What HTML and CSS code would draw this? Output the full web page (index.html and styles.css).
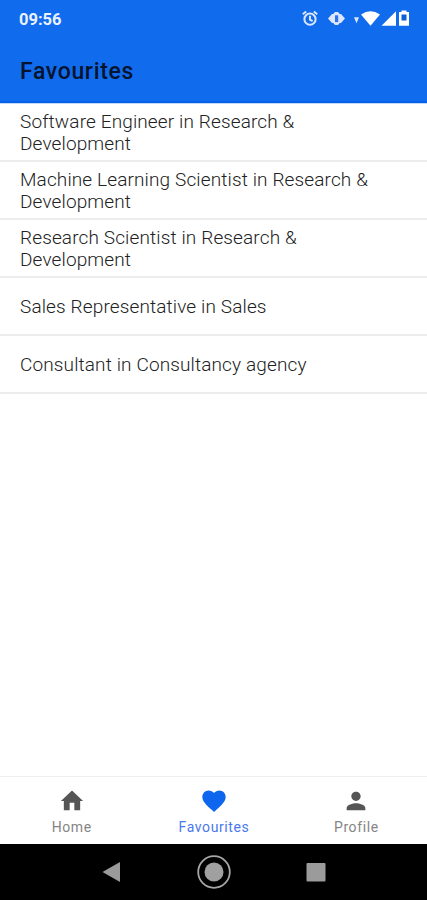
FILE: index.html
```html
<!DOCTYPE html>
<html lang="en">
<head>
    <meta charset="UTF-8">
    <meta name="viewport" content="width=device-width, initial-scale=1.0">
    <title>Favourites</title>
    <link rel="stylesheet" href="styles.css">
</head>
<body>

<header class="header">
    <div class="status-bar">
        <span class="time">09:56</span>
        <svg class="status-icons" width="110" height="22" viewBox="0 0 110 22">
            <!-- Alarm -->
            <g fill="none" stroke="#dce7ff" stroke-width="2">
                <circle cx="10" cy="11.2" r="5.6"/>
                <path d="M10 7.8v3.8l2.6 1.6M2.8 6.2l3.4-2.8M17.2 6.2l-3.4-2.8"/>
            </g>
            <!-- Vibrate -->
            <path fill="#dce7ff" d="M28 10.6l4-4.500h1.500c.5-1.600 1.200-2 3-2s2.500.4 3 2h1.500l4 4.500-4 4.500h-1.500c-.5 1.600-1.200 2-3 2s-2.500-.4-3-2H32z"/>
            <rect x="35" y="7.300" width="3.200" height="6.800" fill="#2e73ed"/>
            <!-- Wifi -->
            <path fill="#dce7ff" d="M54 9.200h5l-2.500 6z"/>
            <path fill="#fff" d="M61 6.600q9.500-6.600 19 0l-9.500 11.200z"/>
            <!-- Signal -->
            <path fill="#fff" d="M81.500 17.800L96 3.200v14.600z"/>
            <!-- Battery -->
            <path fill="#fff" d="M101.500 2.500h5v1.600h2.500v13.700h-10V4.100h2.500z"/>
            <rect x="101.500" y="6.500" width="5" height="6" fill="#0d5ed8"/>
        </svg>
    </div>
    <h1 class="title">Favourites</h1>
</header>

<main class="job-list">
    <div class="job">Software Engineer in Research &amp; Development</div>
    <div class="job">Machine Learning Scientist in Research &amp; Development</div>
    <div class="job">Research Scientist in Research &amp; Development</div>
    <div class="job">Sales Representative in Sales</div>
    <div class="job">Consultant in Consultancy agency</div>
</main>

<nav class="tabs">
    <div class="tab">
        <svg width="28" height="28" viewBox="0 0 24 24"><path d="M10 20v-6.500h4V20h5v-8h2.500L12 3 2.500 12H5v8z"/></svg>
        <span>Home</span>
    </div>
    <div class="tab active">
        <svg width="28" height="28" viewBox="0 0 24 24"><path d="M12 21.350l-1.450-1.320C5.400 15.360 2 12.280 2 8.500 2 5.420 4.420 3 7.500 3c1.740 0 3.410.81 4.500 2.090C13.090 3.810 14.760 3 16.500 3 19.580 3 22 5.420 22 8.500c0 3.780-3.400 6.860-8.550 11.540L12 21.350z"/></svg>
        <span>Favourites</span>
    </div>
    <div class="tab">
        <svg width="28" height="28" viewBox="0 0 24 24"><path d="M12 12c2.210 0 4-1.790 4-4s-1.790-4-4-4-4 1.790-4 4 1.790 4 4 4zm0 2c-2.670 0-8 1.340-8 4v2h16v-2c0-2.660-5.330-4-8-4z"/></svg>
        <span>Profile</span>
    </div>
</nav>

<!-- Android navigation buttons -->
<footer class="system-nav">
    <svg width="36" height="36" viewBox="0 0 36 36"><path fill="#9b9b9b" d="M8.500 18L26 8v20z"/></svg>
    <svg width="36" height="36" viewBox="0 0 36 36">
        <circle cx="18" cy="18" r="15.800" fill="none" stroke="#a6a6a6" stroke-width="1.800"/>
        <circle cx="18" cy="18" r="9.500" fill="#a0a0a0"/>
    </svg>
    <svg width="36" height="36" viewBox="0 0 36 36"><rect x="8.500" y="9" width="19" height="18.500" rx="1" fill="#9b9b9b"/></svg>
</footer>

</body>
</html>
```

FILE: styles.css
```css
body {
    margin: 0;
    height: 100vh;
    display: flex;
    flex-direction: column;
    background-color: #fff;
    font-family: Roboto, sans-serif;
}

.header {
    height: 103px;
    box-sizing: border-box;
    background-color: #116bed;
    border-bottom: 2px solid #0661e7;
}

.status-bar {
    display: flex;
    justify-content: space-between;
    align-items: center;
    height: 38px;
    padding: 0 10px 0 19px;
}

.status-icons {
    margin-right: 7px;
}

.time {
    color: #eaf1ff;
    font-size: 16.5px;
    font-weight: 700;
}

.title {
    margin: 0;
    padding-left: 20px;
    color: #05142e;
    font-size: 23px;
    font-weight: 500;
    line-height: 68px;
    letter-spacing: 0.65px;
}

.job-list {
    flex: 1;
    border-top: 1px solid #c4d8fb;
}

.job {
    height: 58px;
    box-sizing: border-box;
    display: flex;
    align-items: center;
    padding: 2px 50px 0 20px;
    border-bottom: 2px solid #ececec;
    color: #222;
    font-size: 19px;
    font-weight: 300;
    line-height: 22.5px;
    letter-spacing: 0.13px;
}

.tabs {
    display: flex;
    height: 68px;
    box-sizing: border-box;
    border-top: 1px solid #efefef;
}

.tab {
    flex: 1;
    display: flex;
    flex-direction: column;
    align-items: center;
    padding: 10px 0 0 1px;
    color: #858585;
    fill: #555;
    font-size: 14px;
    line-height: 24px;
    letter-spacing: 0.6px;
}

.tab.active {
    color: #4979ec;
    fill: #0e66ee;
}

.system-nav {
    display: flex;
    justify-content: center;
    align-items: center;
    gap: 66px;
    height: 56px;
    background-color: #000;
}
```
